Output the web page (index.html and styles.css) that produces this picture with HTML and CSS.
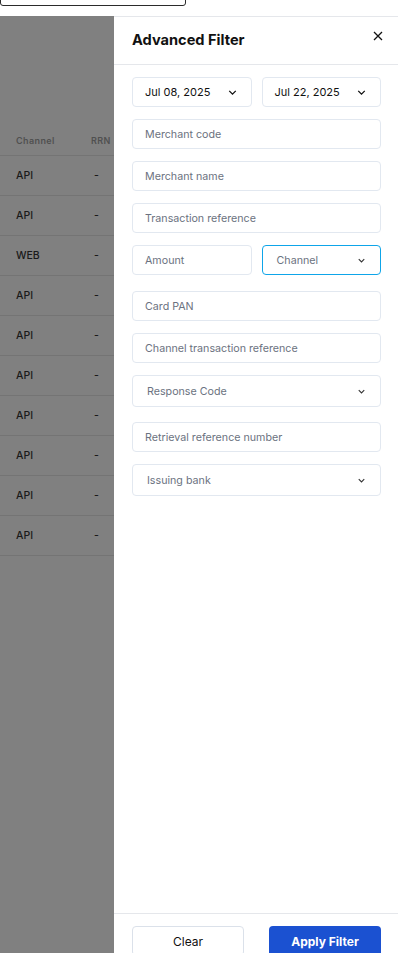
FILE: index.html
```html
<!DOCTYPE html>
<html lang="en">
<head>
  <meta charset="UTF-8">
  <title>Transactions - Advanced Filter</title>
  <link rel="stylesheet" href="styles.css">
</head>
<body>

<div class="topbar">
  <div class="search-box"></div>
</div>

<div class="main">
  <div class="backdrop">
    <table class="tx-table">
      <tr><th>Channel</th><th class="rrn">RRN</th></tr>
      <tr><td>API</td><td class="rrn">-</td></tr>
      <tr><td>API</td><td class="rrn">-</td></tr>
      <tr><td>WEB</td><td class="rrn">-</td></tr>
      <tr><td>API</td><td class="rrn">-</td></tr>
      <tr><td>API</td><td class="rrn">-</td></tr>
      <tr><td>API</td><td class="rrn">-</td></tr>
      <tr><td>API</td><td class="rrn">-</td></tr>
      <tr><td>API</td><td class="rrn">-</td></tr>
      <tr><td>API</td><td class="rrn">-</td></tr>
      <tr><td>API</td><td class="rrn">-</td></tr>
    </table>
  </div>

  <div class="drawer">
    <div class="drawer-head">
      <h2>Advanced Filter</h2>
      <button class="close-btn" aria-label="Close">
        <svg width="10" height="10" viewBox="0 0 10 10"><path d="M1 1l8 8M9 1l-8 8" stroke="#111" stroke-width="1.3" fill="none"/></svg>
      </button>
    </div>

    <div class="drawer-body">
      <div class="pair">
        <div class="field select date">Jul 08, 2025 <svg class="chev" width="13" height="13" viewBox="0 0 24 24"><path d="M6 9l6 6 6-6" stroke="#111" stroke-width="2.4" fill="none"/></svg></div>
        <div class="field select date">Jul 22, 2025 <svg class="chev" width="13" height="13" viewBox="0 0 24 24"><path d="M6 9l6 6 6-6" stroke="#111" stroke-width="2.4" fill="none"/></svg></div>
      </div>
      <div class="field">Merchant code</div>
      <div class="field">Merchant name</div>
      <div class="field">Transaction reference</div>
      <div class="pair">
        <div class="field">Amount</div>
        <div class="field select focused">Channel <svg class="chev" width="11" height="11" viewBox="0 0 24 24"><path d="M6 9l6 6 6-6" stroke="#333" stroke-width="2.4" fill="none"/></svg></div>
      </div>
      <div class="field gap-top">Card PAN</div>
      <div class="field">Channel transaction reference</div>
      <div class="field select tall">Response Code <svg class="chev" width="11" height="11" viewBox="0 0 24 24"><path d="M6 9l6 6 6-6" stroke="#333" stroke-width="2.4" fill="none"/></svg></div>
      <div class="field gap-top-sm">Retrieval reference number</div>
      <div class="field select tall">Issuing bank <svg class="chev" width="11" height="11" viewBox="0 0 24 24"><path d="M6 9l6 6 6-6" stroke="#333" stroke-width="2.4" fill="none"/></svg></div>
    </div>

    <div class="drawer-foot">
      <button class="btn btn-clear">Clear</button>
      <button class="btn btn-apply">Apply Filter</button>
    </div>
  </div>
</div>

</body>
</html>
```

FILE: styles.css
```css
body {
  margin: 0;
  font-family: Inter, "Liberation Sans", Arial, sans-serif;
  background: #fff;
  color: #111;
  height: 953px;
  overflow: hidden;
}
.topbar {
  height: 16px;
  overflow: hidden;
}
.search-box {
  width: 186px;
  height: 26px;
  margin-top: -20px;
  border: 1px solid #2b2b2b;
  border-radius: 3px;
  box-sizing: border-box;
}
.main {
  display: flex;
  height: 937px;
}
.backdrop {
  width: 114px;
  background: #808080;
  padding-top: 109px;
  box-sizing: border-box;
}
.tx-table {
  width: 100%;
  border-collapse: collapse;
}
.tx-table th {
  height: 30px;
  padding: 0 0 0 16px;
  text-align: left;
  font-size: 9px;
  font-weight: 600;
  color: #505050;
  letter-spacing: 0.4px;
  border-bottom: 1px solid #747474;
}
.tx-table td {
  height: 39px;
  padding: 0 0 0 16px;
  font-size: 10.5px;
  font-weight: 500;
  color: #1a1a1a;
  border-bottom: 1px solid #747474;
}
.tx-table .rrn {
  padding-left: 0;
  width: 20px;
}
.tx-table td.rrn {
  padding-left: 3px;
}
.drawer {
  flex: 1;
  display: flex;
  flex-direction: column;
  border-top: 1px solid #e5e7eb;
  background: #fff;
}
.drawer-head {
  height: 47px;
  display: flex;
  align-items: center;
  justify-content: space-between;
  padding: 0 15px 0 18px;
  border-bottom: 1px solid #e5e7eb;
}
.drawer-head h2 {
  margin: 0;
  font-size: 14.6px;
  font-weight: 700;
  color: #111;
  margin-top: -2px;
}
.close-btn {
  background: none;
  border: none;
  padding: 0;
  margin-top: -9px;
  cursor: pointer;
}
.drawer-body {
  flex: 1;
  padding: 12px 17px 0 18px;
  display: flex;
  flex-direction: column;
  gap: 12px;
}
.pair {
  display: grid;
  grid-template-columns: 1fr 1fr;
  gap: 10px;
}
.field {
  height: 30px;
  box-sizing: border-box;
  border: 1px solid #e2e8f0;
  border-radius: 4px;
  padding: 0 12px;
  display: flex;
  align-items: center;
  font-size: 10.7px;
  color: #6b7280;
}
.field.date {
  color: #111;
  font-size: 11px;
}
.select {
  justify-content: space-between;
}
.chev {
  flex: none;
}
.field.focused {
  border-color: #0ea5e9;
  color: #6b7280;
  padding-left: 14px;
  padding-right: 13px;
}
.field.tall {
  height: 32px;
  padding-left: 14px;
  padding-right: 13px;
}
.gap-top {
  margin-top: 4px;
}
.gap-top-sm {
  margin-top: 3px;
}
.drawer-foot {
  border-top: 1px solid #e5e7eb;
  padding: 12px 17px 0 18px;
  height: 27px;
  display: flex;
  justify-content: space-between;
}
.btn {
  width: 112px;
  height: 30px;
  border-radius: 4px;
  font-family: inherit;
  font-size: 12px;
  cursor: pointer;
}
.btn-clear {
  background: #fff;
  border: 1px solid #dbe1ea;
  color: #111;
}
.btn-apply {
  background: #1b51d1;
  border: none;
  color: #fff;
  font-weight: 700;
}
```
